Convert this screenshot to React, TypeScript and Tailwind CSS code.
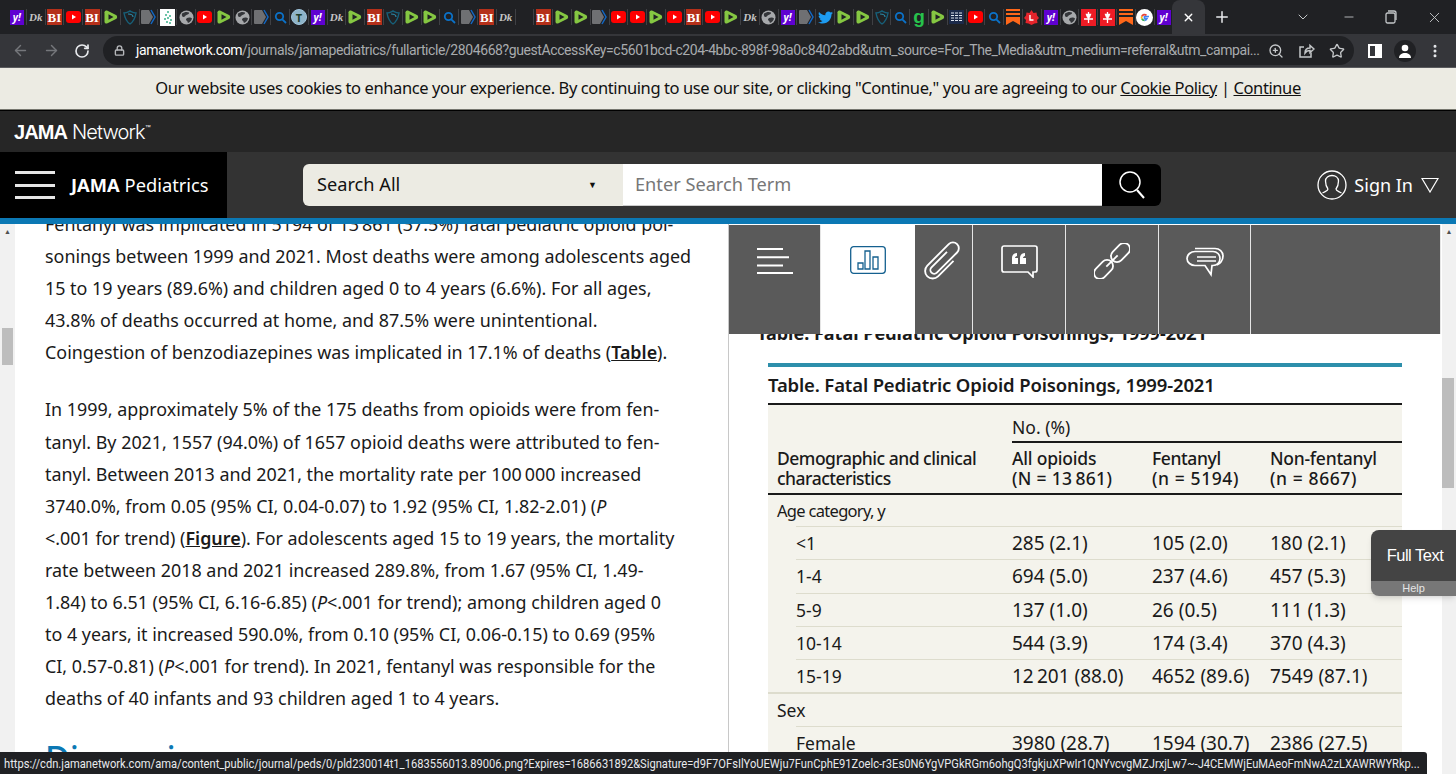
import { FaTwitter } from "react-icons/fa";
import { ArrowLeft, ArrowRight, ChevronDown, Lock, Minus, MoreVertical, Plus, RotateCw, Star, X, ZoomIn } from "lucide-react";

const tabIcons = [
  "yahoo", "dk", "bi", "yt", "bi", "rumble", "shield", "arrow", "qr", "globe", "yt", "rumble", "globe", "arrow", "search", "tcircle",
  "yahoo", "dk", "rumble", "bi", "shield", "rumble", "rumble", "search", "arrow", "bi", "dk", "blank", "bi", "rumble", "rumble", "arrow",
  "yt", "yt", "rumble", "yt", "bi", "yt", "rumble", "dk", "globe", "yahoo", "arrow", "twitter", "rumble", "rumble", "shield", "search",
  "green", "rumble", "news", "yt", "search", "bookmark", "redl", "yahoo", "globe", "pin", "pin", "bookmark", "google", "yahoo",
];

function Favicon({ kind }: { kind: string }) {
  switch (kind) {
    case "yahoo":
      return <div className="flex h-[15px] w-[14px] items-center justify-center bg-[#5f01d1] text-[10px] font-bold italic leading-none text-white">y!</div>;
    case "dk":
      return <div className="w-[15px] text-center font-['Liberation_Serif',serif] text-[11px] font-bold italic leading-none text-[#c4c4c4]">Dk</div>;
    case "bi":
      return <div className="flex h-[16px] w-[15px] items-center justify-center bg-[#b5301a] font-['Liberation_Serif',serif] text-[13px] font-bold leading-none text-white">BI</div>;
    case "yt":
      return (
        <svg width="15" height="12" viewBox="0 0 15 12">
          <rect width="15" height="12" rx="3" fill="#f00" />
          <path d="M6 3.500v5l4-2.500z" fill="#fff" />
        </svg>
      );
    case "rumble":
      return (
        <svg width="14" height="16" viewBox="0 0 14 16">
          <path d="M3 1.500 12 6a2.300 2.300 0 0 1 0 4l-9 4.500A2 2 0 0 1 .5 12.700V3.300A2 2 0 0 1 3 1.500z" fill="#85c742" />
          <path d="M4.500 5.300v5.400L9.500 8z" fill="#202124" />
        </svg>
      );
    case "shield":
      return (
        <svg width="14" height="15" viewBox="0 0 14 15" fill="none">
          <path d="M1 3c3 0 4-1 6-2 2 1 3 2 6 2-1 6-3 9-6 11C4 12 2 9 1 3z" stroke="#17607a" strokeWidth="1.400" />
          <path d="M5 4c3 0 5 1 5 3" stroke="#2a8aa8" strokeWidth="1.200" />
        </svg>
      );
    case "arrow":
      return (
        <svg width="15" height="16" viewBox="0 0 15 16">
          <path d="M0 2a1 1 0 0 1 1-1h7l4 7-4 7H1a1 1 0 0 1-1-1z" fill="#6f7073" />
          <path d="M10 1l4 7-4 7" fill="none" stroke="#1267c4" strokeWidth="1.500" />
        </svg>
      );
    case "qr":
      return (
        <svg width="15" height="17" viewBox="0 0 15 17">
          <rect width="15" height="17" fill="#fff" />
          <path d="M7 2h2v2H7zM5 5h2v2H5zM9 6h2v2H9zM7 8h2v2H7zM4 9h2v2H4zM10 10h2v2h-2zM6 12h2v2H6zM9 13h2v2H9z" fill="#6cc4a8" />
        </svg>
      );
    case "globe":
      return (
        <svg width="15" height="15" viewBox="0 0 15 15">
          <circle cx="7.500" cy="7.500" r="7" fill="#a6a8ab" />
          <path d="M3 3.500c2-1.500 5-2 7-1 .5 1-1 2-2.500 2.500S6 7 4.500 7 2.500 5 3 3.500zM8 8c2-1 4-.5 5 .5-.5 2-2 4-4 4.500-.5-1-.5-2-1.500-2.500S7 9 8 8z" fill="#34363a" />
        </svg>
      );
    case "search":
      return (
        <svg width="13" height="13" viewBox="0 0 13 13" fill="none" stroke="#0b72c9" strokeWidth="1.800">
          <circle cx="5.500" cy="5.500" r="3.700" />
          <path d="M8.300 8.300 12 12" />
        </svg>
      );
    case "tcircle":
      return (
        <div className="flex h-[16px] w-[16px] items-center justify-center rounded-full border border-[#9fc4dc] bg-[#8fb4c8] text-[11px] font-bold leading-none text-[#1d3d2a]">T</div>
      );
    case "twitter":
      return <FaTwitter className="text-[15px] text-[#1d9bf0]" />;
    case "green":
      return <div className="font-['Liberation_Sans',sans-serif] text-[19px] font-bold leading-[14px] text-[#27c24c]">g</div>;
    case "news":
      return (
        <svg width="15" height="14" viewBox="0 0 15 14">
          <rect width="15" height="14" fill="#1b2a4a" />
          <path d="M2 3h11M2 5.500h11M2 8h11M2 10.500h11" stroke="#dfe6f0" strokeWidth="1" strokeDasharray="3 1" />
        </svg>
      );
    case "bookmark":
      return (
        <svg width="14" height="16" viewBox="0 0 14 16" fill="#ff6719">
          <path d="M0 0h14v2H0zM0 4h14v2H0zM0 8h14v8l-7-4-7 4z" />
        </svg>
      );
    case "redl":
      return (
        <svg width="15" height="15" viewBox="0 0 15 15">
          <path d="M7.500 0l2 3 3-.5.500 3L15 8l-2 2 .5 3-3 .5-3 1.500-3-1.500-3-.5.500-3L0 8l2-2.500.5-3 3 .5z" fill="#e5242b" />
          <path d="M6 5v5h3.500" fill="none" stroke="#fff" strokeWidth="1.400" />
        </svg>
      );
    case "pin":
      return (
        <svg width="15" height="17" viewBox="0 0 15 17">
          <rect width="15" height="17" fill="#ee1c25" />
          <path d="M3 10h9M7.500 3v11M5.500 5.500h4l-1 2.500h-2z" stroke="#fff" strokeWidth="1.300" fill="#fff" />
        </svg>
      );
    case "google":
      return (
        <svg width="17" height="17" viewBox="0 0 17 17">
          <circle cx="8.500" cy="8.500" r="8.500" fill="#fff" />
          <path d="M13 7.500H8.500v2h2.500a2.800 2.800 0 0 1-2.500 1.800" fill="none" stroke="#4285f4" strokeWidth="1.700" />
          <path d="M8.500 11.300a3 3 0 0 1-2.700-1.700" fill="none" stroke="#34a853" strokeWidth="1.700" />
          <path d="M5.800 9.600a3 3 0 0 1 0-2.300" fill="none" stroke="#fbbc05" strokeWidth="1.700" />
          <path d="M5.800 7.300a3 3 0 0 1 4.700-1" fill="none" stroke="#ea4335" strokeWidth="1.700" />
        </svg>
      );
    default:
      return <div className="h-[15px] w-[15px]" />;
  }
}

function TabStrip() {
  return (
    <div className="flex h-[34px] items-center bg-[#202124] pl-[8px]">
      {tabIcons.map((kind, i) => (
        <div key={i} className="flex h-[16px] w-[18.800px] shrink-0 items-center justify-center border-r border-[#3f4044]">
          <Favicon kind={kind} />
        </div>
      ))}
      <div className="-ml-[1px] flex h-[34px] w-[33px] items-center justify-center rounded-t-[8px] bg-[#35363a]">
        <X size={13} strokeWidth={2.500} className="text-white" />
      </div>
      <Plus size={18} strokeWidth={2} className="ml-[8px] text-[#e8eaed]" />
      <div className="ml-auto flex items-center text-[#c4c7c9]">
        <ChevronDown size={16} strokeWidth={1.500} className="mr-[31px]" />
        <Minus size={14} strokeWidth={1.500} className="mr-[29px]" />
        <svg width="12" height="14" viewBox="0 0 12 14" fill="none" stroke="currentColor" strokeWidth="1.300" className="mr-[29px]">
          <rect x="1" y="3" width="9" height="10" rx="1.500" />
          <path d="M3 1h6a2 2 0 0 1 2 2v7" />
        </svg>
        <X size={17} strokeWidth={1.300} className="mr-[13px]" />
      </div>
    </div>
  );
}

function Toolbar() {
  return (
    <div className="flex h-[34px] items-center border-b border-[#5a5b5e] bg-[#35363a] pl-[12px]">
      <ArrowLeft size={17} strokeWidth={2} className="text-[#75777b]" />
      <ArrowRight size={17} strokeWidth={2} className="ml-[14px] text-[#75777b]" />
      <RotateCw size={16} strokeWidth={2.500} className="ml-[14px] text-[#e8eaed]" />
      <div className="ml-[13px] flex h-[29px] w-[1251px] items-center rounded-full bg-[#202124] pl-[11px]">
        <Lock size={11} strokeWidth={3} className="shrink-0 text-[#b5b7ba]" />
        <span className="ml-[11px] whitespace-nowrap font-['Roboto',sans-serif] text-[14px] tracking-[-0.410px] text-[#a8abae]">
          <span className="text-white">jamanetwork.com</span>
          /journals/jamapediatrics/fullarticle/2804668?guestAccessKey=c5601bcd-c204-4bbc-898f-98a0c8402abd&utm_source=For_The_Media&utm_medium=referral&utm_campai...
        </span>
        <div className="ml-auto flex items-center gap-[14px] pr-[9px] text-[#c4c7c9]">
          <ZoomIn size={16} strokeWidth={2} />
          <svg width="17" height="16" viewBox="0 0 17 16" fill="none" stroke="currentColor" strokeWidth="1.500">
            <path d="M13 9.500V14H2V4h4" />
            <path d="M7 10c0-3 2-5 5-5V2.500L16 6l-4 3.500V7.500c-2 0-4 1-5 2.500z" />
          </svg>
          <Star size={16} strokeWidth={2} />
        </div>
      </div>
      <div className="ml-[14px] flex h-[14px] w-[14px] justify-end border-2 border-white">
        <div className="h-full w-[5px] bg-white" />
      </div>
      <div className="ml-[12px] flex h-[22px] w-[22px] items-center justify-center rounded-full bg-[#202124]">
        <svg width="14" height="14" viewBox="0 0 14 14" fill="#fff">
          <circle cx="7" cy="4" r="3.300" />
          <path d="M1 14c0-3.500 3-5 6-5s6 1.500 6 5z" />
        </svg>
      </div>
      <MoreVertical size={16} strokeWidth={2.500} className="ml-[11px] text-[#e8eaed]" />
    </div>
  );
}

function CookieBar() {
  return (
    <div className="flex h-[42px] items-center justify-center border-b border-[#77776f] bg-[#ecebe3] font-['Noto_Sans',sans-serif] text-[16.500px] tracking-[-0.400px] text-[#111]">
      <span>
        Our website uses cookies to enhance your experience. By continuing to use our site, or clicking "Continue," you are agreeing to our{" "}
        <span className="underline">Cookie Policy</span> | <span className="underline">Continue</span>
      </span>
    </div>
  );
}

function SiteHeader() {
  return (
    <>
      <div className="flex h-[42px] items-center border-t border-black bg-[#262626] pl-[14px] font-['Liberation_Sans',sans-serif] text-[20px] tracking-[-0.900px] text-white">
        <span className="font-bold">JAMA</span>
        <span className="ml-[5px] font-['Inter',sans-serif] font-light">Network</span>
        <span className="mb-[8px] text-[6px]">™</span>
      </div>
      <div className="flex h-[66px] bg-[#333333]">
        <div className="flex w-[227px] items-center bg-black pl-[15px] font-['Noto_Sans',sans-serif] text-[18.300px] text-white">
          <div className="flex w-[40px] flex-col gap-[9.500px]">
            <div className="h-[3px] bg-[#e6e6e6]" />
            <div className="h-[3px] bg-[#e6e6e6]" />
            <div className="h-[3px] bg-[#e6e6e6]" />
          </div>
          <span className="ml-[16px] font-bold">JAMA</span>
          <span className="ml-[5px]">Pediatrics</span>
        </div>
        <div className="ml-[76px] mt-[12px] flex h-[42px] w-[858px] overflow-hidden rounded-[6px] font-['Noto_Sans',sans-serif] text-[18.200px]">
          <div className="flex w-[320px] items-center justify-between bg-[#ecebe3] pl-[14px] pr-[26px] text-[#111]">
            <span>Search All</span>
            <span className="text-[9px]">▼</span>
          </div>
          <div className="flex flex-1 items-center border-b border-[#ccc] bg-white pl-[12px] text-[#777]">Enter Search Term</div>
          <div className="flex w-[59px] items-center justify-center bg-black">
            <svg width="30" height="30" viewBox="0 0 30 30" fill="none" stroke="#fff" strokeWidth="1.500">
              <circle cx="13" cy="12" r="10" />
              <path d="M20 20l7 8" strokeWidth="2" />
            </svg>
          </div>
        </div>
        <div className="ml-auto flex items-center pr-[17px] font-['Noto_Sans',sans-serif] text-[18px] text-white">
          <svg width="30" height="30" viewBox="0 0 30 30" fill="none" stroke="#fff" strokeWidth="1.300">
            <circle cx="15" cy="15" r="14" />
            <path d="M11 19c-1.500-2-2.500-5-2.500-8 0-3.500 3-5.500 6.500-5.500s6.500 2 6.500 5.500c0 3-1 6-2.500 8 0 2 3 2.500 5.500 4M11 19c0 2-3 2.500-5.500 4" />
          </svg>
          <span className="ml-[7px]">Sign In</span>
          <svg width="18" height="16" viewBox="0 0 18 16" fill="none" stroke="#fff" strokeWidth="1.200" className="ml-[8px]">
            <path d="M1 1.500h16L9 15z" />
          </svg>
        </div>
      </div>
      <div className="h-[6px] bg-[#0b78b4]" />
    </>
  );
}

function ArticlePane() {
  return (
    <div className="flex h-full w-[729px] shrink-0 border-r border-[#c8c8c8]">
      <div className="w-[15px] shrink-0 bg-[#f1f1f1]">
        <div className="flex h-[16px] items-center justify-center text-[7px] text-[#505050]">▲</div>
        <div className="mx-[2px] mt-[88px] h-[37px] bg-[#bdbdbd]" />
      </div>
      <div className="flex-1 overflow-hidden pl-[30px] font-['Noto_Sans',sans-serif] text-[17.900px] leading-[32.100px] text-[#1a1a1a]">
        <p className="-mt-[16px] whitespace-nowrap">
          Fentanyl was implicated in 5194 of 13{"\u2009"}861 (37.5%) fatal pediatric opioid poi-
          <br />
          sonings between 1999 and 2021. Most deaths were among adolescents aged
          <br />
          15 to 19 years (89.6%) and children aged 0 to 4 years (6.6%). For all ages,
          <br />
          43.8% of deaths occurred at home, and 87.5% were unintentional.
          <br />
          Coingestion of benzodiazepines was implicated in 17.1% of deaths (<span className="font-semibold underline">Table</span>).
        </p>
        <p className="mt-[25px] whitespace-nowrap">
          In 1999, approximately 5% of the 175 deaths from opioids were from fen-
          <br />
          tanyl. By 2021, 1557 (94.0%) of 1657 opioid deaths were attributed to fen-
          <br />
          tanyl. Between 2013 and 2021, the mortality rate per 100{"\u2009"}000 increased
          <br />
          3740.0%, from 0.05 (95% CI, 0.04-0.07) to 1.92 (95% CI, 1.82-2.01) (<i>P</i>
          <br />
          &lt;.001 for trend) (<span className="font-semibold underline">Figure</span>). For adolescents aged 15 to 19 years, the mortality
          <br />
          rate between 2018 and 2021 increased 289.8%, from 1.67 (95% CI, 1.49-
          <br />
          1.84) to 6.51 (95% CI, 6.16-6.85) (<i>P</i>&lt;.001 for trend); among children aged 0
          <br />
          to 4 years, it increased 590.0%, from 0.10 (95% CI, 0.06-0.15) to 0.69 (95%
          <br />
          CI, 0.57-0.81) (<i>P</i>&lt;.001 for trend). In 2021, fentanyl was responsible for the
          <br />
          deaths of 40 infants and 93 children aged 1 to 4 years.
        </p>
        <h2 className="mt-[24px] text-[34px] font-medium leading-[40px] text-[#0b78b4]">Discussion</h2>
      </div>
    </div>
  );
}

const sidebarTabs = [
  { box: "w-[92px] pt-[23px]", icon: "lines" },
  { box: "w-[94px] pt-[21px]", icon: "chart", active: true },
  { box: "w-[58px] pt-[21px]", icon: "clip" },
  { box: "w-[93px] pt-[20px]", icon: "quote" },
  { box: "w-[93px] pt-[18px]", icon: "link" },
  { box: "w-[92px] pt-[22px]", icon: "comment" },
  { box: "flex-1", icon: "" },
];

function TabIcon({ icon }: { icon: string }) {
  if (icon === "lines")
    return (
      <svg width="36" height="26" viewBox="0 0 36 26" stroke="#fff" strokeWidth="2">
        <path d="M0 1h26M0 9.300h32M0 17.600h26M0 25h36" />
      </svg>
    );
  if (icon === "chart")
    return (
      <svg width="36" height="28" viewBox="0 0 36 28" fill="none" stroke="#14608f" strokeWidth="1.300">
        <rect x=".7" y=".7" width="34.600" height="26.600" rx="3" />
        <path d="M8 17h5v6H8zM15 5h5v18h-5zM23 11h5v12h-5z" />
      </svg>
    );
  if (icon === "clip")
    return (
      <svg width="32" height="32" viewBox="0 0 38 38" fill="none" stroke="#fff" strokeWidth="2.200" className="overflow-visible">
        <g transform="rotate(45 19 19)">
          <path d="M13 8V34a4.500 4.500 0 0 0 9 0V0a7 7 0 0 0-14 0V36a9 9 0 0 0 18 0V10" />
        </g>
      </svg>
    );
  if (icon === "quote")
    return (
      <svg width="37" height="33" viewBox="0 0 37 33" fill="none" stroke="#fff" strokeWidth="1.700">
        <path d="M3 1h31a2 2 0 0 1 2 2v22a2 2 0 0 1-2 2h-2v5l-5-5H3a2 2 0 0 1-2-2V3a2 2 0 0 1 2-2z" />
        <path d="M11 19v-6c0-3 2-5 5-5v3c-1 0-2 1-2 2h3v6zM19 19v-6c0-3 2-5 5-5v3c-1 0-2 1-2 2h3v6z" fill="#fff" stroke="none" />
      </svg>
    );
  if (icon === "link")
    return (
      <svg width="36" height="36" viewBox="0 0 36 36" fill="none" stroke="#fff" strokeWidth="1.800">
        <g transform="rotate(-45 18 18)">
          <rect x="-5" y="12" width="22" height="12" rx="6" />
          <rect x="19" y="12" width="22" height="12" rx="6" />
          <path d="M10 18h16" />
        </g>
      </svg>
    );
  if (icon === "comment")
    return (
      <svg width="38" height="30" viewBox="0 0 38 30" fill="none" stroke="#fff" strokeWidth="1.700">
        <path d="M9 1.500h20c4.500 0 8 3 8 7.500s-3 8-6 9" />
        <path d="M9 4.500h18c4 0 7 3 7 7s-3 7-7 7h-1l-1 9-6-9H9c-4 0-8-3-8-7s4-7 8-7zM11 10h19M11 14h19" />
      </svg>
    );
  return null;
}

function SidebarTabs() {
  return (
    <div className="absolute left-0 right-[15px] top-px flex h-[109px]">
      {sidebarTabs.map((t, i) => (
        <div key={i} className={`${t.box} flex justify-center ${t.active ? "bg-white" : "border-r border-[#e5e5e5] bg-[#5a5a5a]"}`}>
          <TabIcon icon={t.icon} />
        </div>
      ))}
    </div>
  );
}

const ageRows = [
  ["<1", "285 (2.1)", "105 (2.0)", "180 (2.1)"],
  ["1-4", "694 (5.0)", "237 (4.6)", "457 (5.3)"],
  ["5-9", "137 (1.0)", "26 (0.5)", "111 (1.3)"],
  ["10-14", "544 (3.9)", "174 (3.4)", "370 (4.3)"],
  ["15-19", "12\u2009201 (88.0)", "4652 (89.6)", "7549 (87.1)"],
];

function DataRow({ cells }: { cells: string[] }) {
  return (
    <div className="ml-[28px] flex h-[33.300px] items-center border-t border-[#dddccd]">
      <div className="w-[216px]">{cells[0]}</div>
      <div className="w-[140px] text-[19px]">{cells[1]}</div>
      <div className="w-[118px] text-[19px]">{cells[2]}</div>
      <div className="text-[19px]">{cells[3]}</div>
    </div>
  );
}

function TablePane() {
  return (
    <div className="relative h-full flex-1 overflow-hidden">
      <SidebarTabs />
      <div className="flex h-full">
        <div className="flex-1 overflow-hidden pl-[39px] pr-[40px] font-['Noto_Sans',sans-serif] text-[17.500px] text-[#1a1a1a]">
          <div className="-ml-[11px] mt-[97px] text-[18px] font-bold leading-[24px]">Table. Fatal Pediatric Opioid Poisonings, 1999-2021</div>
          <div className="mt-[18px] h-[4px] bg-[#2d8fab]" />
          <div className="flex h-[38px] items-center border-b-2 border-[#1a1a1a] text-[18.500px] font-semibold tracking-[-0.150px]">
            Table. Fatal Pediatric Opioid Poisonings, 1999-2021
          </div>
          <div className="bg-[#f4f3ec] leading-[20px]">
            <div className="flex h-[88px]">
              <div className="flex w-[244px] flex-col justify-end pb-[5px] pl-[9px] font-medium tracking-[-0.500px]">
                <span>Demographic and clinical</span>
                <span>characteristics</span>
              </div>
              <div className="flex flex-1 flex-col">
                <div className="flex h-[38px] items-end border-b-2 border-[#1a1a1a] pb-[4px]">No. (%)</div>
                <div className="flex flex-1 items-end pb-[5px] font-medium">
                  <div className="flex w-[140px] flex-col">
                    <span className="tracking-[-0.200px]">All opioids</span>
                    <span className="tracking-[0.300px]">(N = 13{"\u2009"}861)</span>
                  </div>
                  <div className="flex w-[118px] flex-col">
                    <span className="tracking-[-0.400px]">Fentanyl</span>
                    <span className="tracking-[0.600px]">(n = 5194)</span>
                  </div>
                  <div className="flex flex-col">
                    <span className="tracking-[-0.250px]">Non-fentanyl</span>
                    <span className="tracking-[0.600px]">(n = 8667)</span>
                  </div>
                </div>
              </div>
            </div>
            <div className="flex h-[33px] items-center border-t-2 border-[#1a1a1a] pl-[9px] text-[16.500px] tracking-[-0.700px]">Age category, y</div>
            {ageRows.map((r) => (
              <DataRow key={r[0]} cells={r} />
            ))}
            <div className="flex h-[33.300px] items-center border-t-2 border-[#dddccd] pl-[9px]">Sex</div>
            <DataRow cells={["Female", "3980 (28.7)", "1594 (30.7)", "2386 (27.5)"]} />
          </div>
        </div>
        <div className="w-[14px] shrink-0 bg-[#f1f1f1]">
          <div className="flex h-[16px] items-center justify-center text-[7px] text-[#505050]">▲</div>
          <div className="mt-[138px] h-[110px] w-[12px] bg-[#bdbdbd]" />
        </div>
      </div>
    </div>
  );
}

function FullTextWidget() {
  return (
    <div className="absolute bottom-[178px] right-0 w-[85px] overflow-hidden rounded-l-[8px] font-['Liberation_Sans',sans-serif] text-white shadow-md">
      <div className="flex h-[51px] items-center justify-center bg-[#444444] pl-[3px] text-[16.500px] tracking-[-0.500px]">Full Text</div>
      <div className="flex h-[15px] items-center justify-center bg-[#777777] text-[11px] text-[#e5e5e5]">Help</div>
    </div>
  );
}

function StatusBar() {
  return (
    <div className="absolute bottom-0 left-0 flex h-[22px] w-[1427px] items-center overflow-hidden rounded-tr-[3px] bg-[#202124] pl-[4px] font-['Roboto',sans-serif] text-[13.500px] text-[#e8eaed] whitespace-nowrap">
      <span className="inline-block origin-left scale-x-[0.825]">
        https://cdn.jamanetwork.com/ama/content_public/journal/peds/0/pld230014t1_1683556013.89006.png?Expires=1686631892&Signature=d9F7OFsIlYoUEWju7FunCphE91Zoelc-r3Es0N6YgVPGkRGm6ohgQ3fgkjuXPwIr1QNYvcvgMZJrxjLw7~-J4CEMWjEuMAeoFmNwA2zLXAWRWYRkp...
      </span>
    </div>
  );
}

export default function App() {
  return (
    <div className="relative flex h-[774px] w-[1456px] flex-col overflow-hidden bg-white">
      <TabStrip />
      <Toolbar />
      <CookieBar />
      <SiteHeader />
      <div className="flex min-h-0 flex-1">
        <ArticlePane />
        <TablePane />
      </div>
      <FullTextWidget />
      <StatusBar />
    </div>
  );
}
